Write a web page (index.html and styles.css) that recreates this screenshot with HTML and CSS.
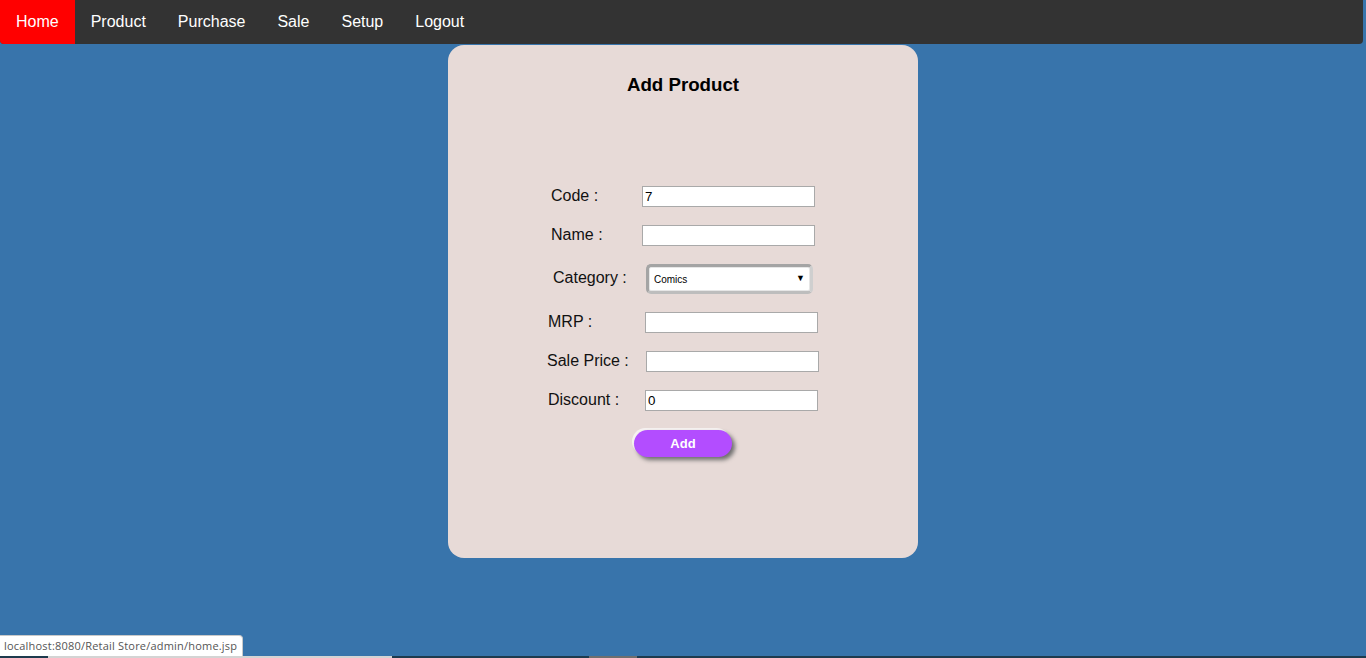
FILE: index.html
```html
<!DOCTYPE html>
<html>
<head>
<meta charset="utf-8">
<title>Add Product</title>
<link rel="stylesheet" href="styles.css">
</head>
<body>
<nav class="topnav">
  <a class="nav-item active" href="#">Home</a>
  <a class="nav-item" href="#">Product</a>
  <a class="nav-item" href="#">Purchase</a>
  <a class="nav-item" href="#">Sale</a>
  <a class="nav-item" href="#">Setup</a>
  <a class="nav-item" href="#">Logout</a>
</nav>
<main class="page">
  <section class="card">
    <h3 class="card-title">Add Product</h3>
    <form class="form">
      <div class="row">
        <label class="lbl lbl-91">Code :</label>
        <input class="field" type="text" value="7">
      </div>
      <div class="row">
        <label class="lbl lbl-91">Name :</label>
        <input class="field" type="text">
      </div>
      <div class="row row-select">
        <label class="lbl lbl-93">Category :</label>
        <span class="select-wrap">
          <select class="select"><option>Comics</option></select>
          <span class="select-arrow">&#9660;</span>
        </span>
      </div>
      <div class="row">
        <label class="lbl lbl-97">MRP :</label>
        <input class="field" type="text">
      </div>
      <div class="row">
        <label class="lbl lbl-99">Sale Price :</label>
        <input class="field" type="text">
      </div>
      <div class="row">
        <label class="lbl lbl-97">Discount :</label>
        <input class="field" type="text" value="0">
      </div>
      <div class="row row-btn">
        <button class="btn" type="button">Add</button>
      </div>
    </form>
  </section>
</main>
<div class="statusbar">localhost:8080/Retail Store/admin/home.jsp</div>
<div class="taskstrip">
  <span class="ts ts-a"></span><span class="ts ts-b"></span><span class="ts ts-c"></span><span class="ts ts-d"></span><span class="ts ts-e"></span>
</div>
</body>
</html>
```
FILE: styles.css
```css
html, body {
  margin: 0;
  padding: 0;
  height: 100%;
}
body {
  background: #3874ab;
  font-family: "Liberation Sans", Arial, sans-serif;
  overflow: hidden;
}
.topnav {
  display: flex;
  height: 44px;
  margin-right: 3px;
  background: #333333;
  border-radius: 0 0 4px 4px;
  overflow: hidden;
}
.nav-item {
  display: block;
  padding: 0 16px;
  line-height: 43px;
  font-size: 16px;
  color: #ffffff;
  text-decoration: none;
}
.nav-item.active {
  background: #ff0000;
}
.page {
  display: flex;
  justify-content: center;
  padding-top: 1px;
}
.card {
  box-sizing: border-box;
  width: 470px;
  height: 513px;
  background: #e7dad7;
  border-radius: 16px;
  padding-top: 28px;
}
.card-title {
  margin: 0;
  text-align: center;
  font-size: 18.72px;
  line-height: 23px;
  font-weight: bold;
  color: #000;
}
.form {
  margin-top: 90px;
  display: flex;
  flex-direction: column;
  gap: 18px;
}
.row {
  display: flex;
  justify-content: center;
  align-items: center;
  height: 21px;
}
.row-select {
  height: 30px;
}
.row-btn {
  height: 27px;
  margin-top: 1px;
}
.lbl {
  font-size: 16px;
  color: #111;
  line-height: 18px;
  padding-bottom: 2px;
}
.lbl-91 { width: 91px; }
.lbl-93 { width: 93px; }
.lbl-97 { width: 97px; }
.lbl-99 { width: 99px; }
.field {
  box-sizing: border-box;
  width: 173px;
  height: 21px;
  margin: 0;
  padding: 1px 2px;
  border: 1px solid #a9a9a9;
  background: #fff;
  font-family: "Liberation Sans", Arial, sans-serif;
  font-size: 13.33px;
  color: #000;
  outline: none;
}
.select-wrap {
  position: relative;
  display: block;
  width: 167px;
  height: 30px;
}
.select {
  box-sizing: border-box;
  width: 167px;
  height: 30px;
  margin: 0;
  padding: 0 0 0 5px;
  border: 3px solid #a4a4a4;
  border-right-color: #cfcfcf;
  border-bottom-color: #bdbdbd;
  border-radius: 5px;
  background: #fff;
  -webkit-appearance: none;
  appearance: none;
  font-family: "Liberation Sans", Arial, sans-serif;
  font-size: 10px;
  color: #000;
  box-shadow: inset 0 0 0 1px #e6e6e6;
  outline: none;
}
.select-arrow {
  position: absolute;
  right: 8px;
  top: 9px;
  font-size: 9px;
  line-height: 10px;
  color: #000;
  pointer-events: none;
}
.btn {
  box-sizing: border-box;
  width: 98px;
  height: 27px;
  margin: 0;
  padding: 0;
  border: none;
  border-radius: 14px;
  background: #b34dff;
  color: #fff;
  font-family: "Liberation Sans", Arial, sans-serif;
  font-size: 13px;
  font-weight: bold;
  box-shadow: 3px 3px 4px #6f6f6f, -2px -2px 0 #f6f2f1;
}
.statusbar {
  position: fixed;
  left: 0;
  bottom: 2px;
  box-sizing: border-box;
  height: 21px;
  padding: 0 5px 0 4px;
  background: #fff;
  border: 1px solid #c9c9c9;
  border-left: none;
  border-bottom: none;
  border-radius: 0 4px 0 0;
  font-family: "Open Sans", "DejaVu Sans", sans-serif;
  font-size: 11px;
  letter-spacing: 0.2px;
  line-height: 20px;
  color: #555;
}
.taskstrip {
  position: fixed;
  left: 0;
  right: 0;
  bottom: 0;
  height: 2px;
  display: flex;
  background: #1e3b4e;
}
.ts { display: block; height: 2px; }
.ts-a { width: 48px; background: #1e3b4e; }
.ts-b { width: 344px; background: #d4d4d4; }
.ts-c { width: 197px; background: #1e3b4e; }
.ts-d { width: 48px; background: #6f6f6f; }
.ts-e { flex: 1; background: #1e3b4e; }
```
